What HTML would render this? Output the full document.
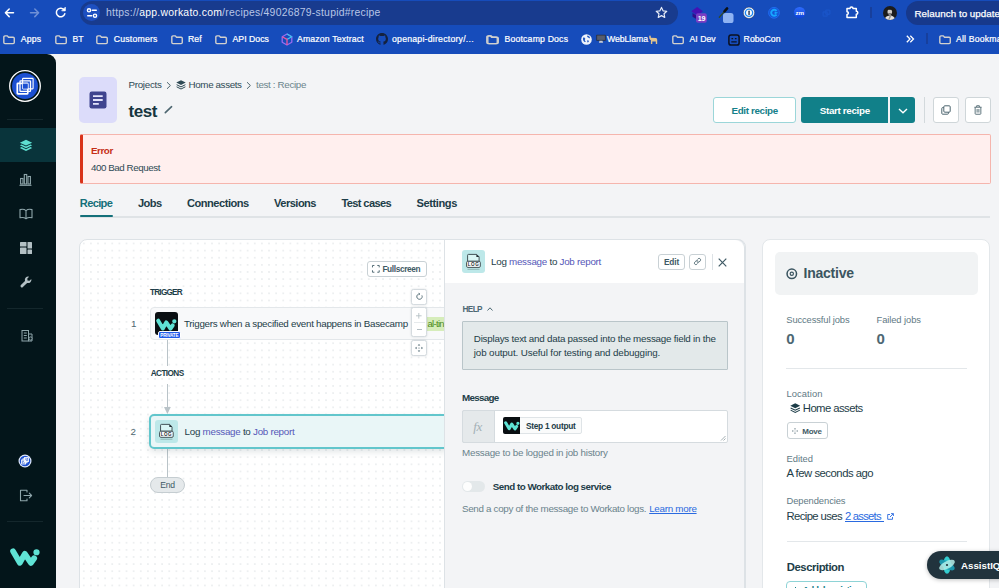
<!DOCTYPE html>
<html><head><meta charset="utf-8"><title>test</title>
<style>
html,body{margin:0;padding:0;}
body{width:999px;height:588px;overflow:hidden;position:relative;background:#f3f4f6;font-family:"Liberation Sans",sans-serif;}
.t{position:absolute;white-space:nowrap;}
.r{position:absolute;box-sizing:border-box;}
svg{position:absolute;overflow:visible;}
a{color:inherit}
</style></head><body>
<div class="r" style="left:0px;top:0px;width:999px;height:54px;background:#164cbb;"></div>
<div class="r" style="left:80px;top:1px;width:598px;height:24px;background:#183b8e;border-radius:12px;"></div>
<svg style="left:0;top:0" width="80" height="26" viewBox="0 0 80 26" fill="none" stroke-linecap="round" stroke-linejoin="round">
<path d="M13.5 12.8H5.6M9.2 9l-3.8 3.8 3.8 3.8" stroke="#fff" stroke-width="1.5"/>
<path d="M30.5 12.8h7.9M34.8 9l3.8 3.8-3.8 3.8" stroke="#6f90d6" stroke-width="1.5"/>
<path d="M64.3 10.2a4.3 4.3 0 1 0 .5 3.6" stroke="#fff" stroke-width="1.5"/>
<path d="M65.3 7.6v3.2h-3.2z" fill="#fff" stroke="#fff" stroke-width="0.8"/>
</svg>
<div class="r" style="left:82.7px;top:3.8px;width:17.4px;height:17.4px;background:#1d4fc0;border-radius:9px;"></div>
<svg style="left:82px;top:3px" width="20" height="20" viewBox="0 0 20 20" fill="none" stroke="#fff" stroke-width="1.4" stroke-linecap="round">
<circle cx="7" cy="7.3" r="1.6"/><path d="M10.3 7.3h4"/><circle cx="13" cy="12.7" r="1.6"/><path d="M5.7 12.7h4"/></svg>
<div class="t" style="left:106.0px;top:6.80px;font-size:10.4px;line-height:12px;letter-spacing:0.25px;color:#ffffff;"><span style="color:#b9c6e6">https://</span>app.workato.com<span style="color:#b9c6e6">/recipes/49026879-stupid#recipe</span></div>
<svg style="left:655px;top:6px" width="13" height="13" viewBox="0 0 24 24" fill="none" stroke="#e6ebf7" stroke-width="2.2" stroke-linejoin="round"><path d="M12 2.6l2.9 6.3 6.8.8-5 4.7 1.3 6.8-6-3.4-6 3.4 1.3-6.800-5-4.700 6.800-.8z"/></svg>
<svg style="left:688px;top:4px" width="24" height="20" viewBox="0 0 24 20"><path d="M3.300 7.200 9.200 3l5.800 4.200-5.800 4.200z" fill="#4511b4"/><path d="M4.500 9v3.800l4.500 2.700V12z" fill="#2f0d8a"/><rect x="8" y="9.200" width="10.800" height="9.600" rx="2" fill="#7b3ec4"/><text x="13.400" y="16.700" font-family="Liberation Sans" font-weight="700" font-size="7.200" fill="#fff" text-anchor="middle" letter-spacing="-.3">19</text></svg>
<svg style="left:716px;top:4px" width="22" height="22" viewBox="0 0 22 22"><rect x="7" y="9" width="10.500" height="10" rx="2.600" fill="#8fb3f3"/><path d="M3.300 13.300L8.300 7.600" stroke="#2f4a2c" stroke-width="1.300" stroke-linecap="round"/><path d="M8.500 7.300l2.600-2.900" stroke="#0c1116" stroke-width="2.600" stroke-linecap="round"/></svg>
<svg style="left:742px;top:6px" width="14" height="14" viewBox="0 0 14 14"><circle cx="7" cy="6.800" r="5.700" fill="#f4f6fb" stroke="#1a2a55" stroke-width=".5"/><circle cx="7" cy="6.800" r="4.300" fill="#1a86f2"/><circle cx="7" cy="6.800" r="3" fill="#f8fafd"/><rect x="6.400" y="4.600" width="1.300" height="4.400" rx=".6" fill="#14233f"/></svg>
<svg style="left:767.200px;top:6px" width="14" height="14" viewBox="0 0 14 14"><circle cx="7" cy="6.800" r="5.400" fill="#1556d6" stroke="#1e6cf0" stroke-width="1"/><path d="M9.600 5a3 3 0 1 0 0 3.600" fill="none" stroke="#16a6ff" stroke-width="1.900"/><path d="M7.600 5.400l3.600 1.400-3.600 1.400z" fill="#16a6ff"/></svg>
<svg style="left:793.400px;top:6px" width="14" height="14" viewBox="0 0 14 14"><defs><linearGradient id="zg" x1="0" y1="0" x2="0" y2="1"><stop offset="0" stop-color="#2f6dff"/><stop offset="1" stop-color="#0c41d8"/></linearGradient></defs><circle cx="6.600" cy="6.700" r="5.800" fill="url(#zg)"/><text x="6.600" y="8.700" font-family="Liberation Sans" font-weight="700" font-size="6.200" fill="#fff" text-anchor="middle" letter-spacing="-.3">zm</text></svg>
<svg style="left:821.500px;top:8.500px" width="9" height="9" viewBox="0 0 12 12" fill="none" stroke="#1a54c8" stroke-width="1.800"><rect x="1.500" y="4" width="5.500" height="5.500" rx="1"/><rect x="5" y="1.500" width="5.500" height="5.500" rx="1"/></svg>
<svg style="left:845px;top:5px" width="16" height="15" viewBox="0 0 16 15" fill="none" stroke="#fff" stroke-width="1.500" stroke-linejoin="round"><path d="M2 3.600h3a1.500 1.500 0 0 1 3 0h3.300v2.700a1.500 1.500 0 0 1 0 3v3.200H2v-3a1.400 1.400 0 0 0 0-2.800z"/></svg>
<div class="r" style="left:870px;top:7px;width:1.8px;height:11px;background:#173f9c;"></div>
<svg style="left:883px;top:6px" width="14" height="14" viewBox="0 0 14 14"><defs><clipPath id="av"><circle cx="7" cy="7" r="7"/></clipPath></defs><g clip-path="url(#av)"><rect width="14" height="14" fill="#1c1c1c"/><ellipse cx="6.800" cy="5.800" rx="2.300" ry="2.900" fill="#cfcac6"/><path d="M4.300 4.300c.6-2.200 4.600-2.200 5.200.2-1-.8-4-.9-5.200-.2z" fill="#151515"/><path d="M5.300 6.900c.9.500 2.100.5 3 0v.8h-3z" fill="#333"/><path d="M1.500 14c.3-3 2.300-4.300 5.300-4.600 3 .1 5 1.400 5.600 4.600z" fill="#e4e1de"/><path d="M6.800 8.800l-1.600 5.200h1l2.400-4.200z" fill="#9a9794"/></g></svg>
<div class="r" style="left:906px;top:1px;width:110px;height:24px;background:#17398c;border-radius:12px;"></div>
<div class="t" style="left:914.5px;top:7.80px;font-size:9.8px;line-height:12px;letter-spacing:0.03px;color:#ffffff;-webkit-text-stroke:0.25px #fff;">Relaunch to update</div>
<svg style="left:3px;top:34.7px" width="12" height="9.5" viewBox="0 0 13 11" preserveAspectRatio="none" fill="none" stroke="#d3d1ce" stroke-width="1.500" stroke-linejoin="round"><path d="M.9 2.300a1.200 1.200 0 0 1 1.200-1.200h2.600l1.300 1.500h5a1.200 1.200 0 0 1 1.200 1.200v5a1.200 1.200 0 0 1-1.200 1.200H2.100a1.200 1.200 0 0 1-1.200-1.200z"/></svg>
<div class="t" style="left:20.7px;top:34.30px;font-size:8.7px;line-height:10px;letter-spacing:0.17px;color:#ffffff;-webkit-text-stroke:0.22px #fff;">Apps</div>
<svg style="left:54.5px;top:34.7px" width="12" height="9.5" viewBox="0 0 13 11" preserveAspectRatio="none" fill="none" stroke="#d3d1ce" stroke-width="1.500" stroke-linejoin="round"><path d="M.9 2.300a1.200 1.200 0 0 1 1.200-1.200h2.600l1.300 1.500h5a1.200 1.200 0 0 1 1.200 1.200v5a1.200 1.200 0 0 1-1.200 1.200H2.100a1.200 1.200 0 0 1-1.200-1.200z"/></svg>
<div class="t" style="left:72.5px;top:34.30px;font-size:8.7px;line-height:10px;letter-spacing:-0.16px;color:#ffffff;-webkit-text-stroke:0.22px #fff;">BT</div>
<svg style="left:96px;top:34.7px" width="12" height="9.5" viewBox="0 0 13 11" preserveAspectRatio="none" fill="none" stroke="#d3d1ce" stroke-width="1.500" stroke-linejoin="round"><path d="M.9 2.300a1.200 1.200 0 0 1 1.200-1.200h2.600l1.300 1.500h5a1.200 1.200 0 0 1 1.200 1.200v5a1.200 1.200 0 0 1-1.200 1.200H2.100a1.200 1.200 0 0 1-1.200-1.200z"/></svg>
<div class="t" style="left:113.7px;top:34.30px;font-size:8.7px;line-height:10px;letter-spacing:0.22px;color:#ffffff;-webkit-text-stroke:0.22px #fff;">Customers</div>
<svg style="left:170.7px;top:34.7px" width="12" height="9.5" viewBox="0 0 13 11" preserveAspectRatio="none" fill="none" stroke="#d3d1ce" stroke-width="1.500" stroke-linejoin="round"><path d="M.9 2.300a1.200 1.200 0 0 1 1.200-1.200h2.600l1.300 1.500h5a1.200 1.200 0 0 1 1.200 1.200v5a1.200 1.200 0 0 1-1.200 1.200H2.100a1.200 1.200 0 0 1-1.200-1.200z"/></svg>
<div class="t" style="left:188.0px;top:34.30px;font-size:8.7px;line-height:10px;letter-spacing:0.05px;color:#ffffff;-webkit-text-stroke:0.22px #fff;">Ref</div>
<svg style="left:215px;top:34.7px" width="12" height="9.5" viewBox="0 0 13 11" preserveAspectRatio="none" fill="none" stroke="#d3d1ce" stroke-width="1.500" stroke-linejoin="round"><path d="M.9 2.300a1.200 1.200 0 0 1 1.200-1.200h2.600l1.300 1.500h5a1.200 1.200 0 0 1 1.200 1.200v5a1.200 1.200 0 0 1-1.200 1.200H2.100a1.200 1.200 0 0 1-1.200-1.200z"/></svg>
<div class="t" style="left:232.5px;top:34.30px;font-size:8.7px;line-height:10px;letter-spacing:0.02px;color:#ffffff;-webkit-text-stroke:0.22px #fff;">API Docs</div>
<svg style="left:487px;top:34.7px" width="12" height="9.5" viewBox="0 0 13 11" preserveAspectRatio="none" fill="none" stroke="#d3d1ce" stroke-width="1.500" stroke-linejoin="round"><path d="M.9 2.300a1.200 1.200 0 0 1 1.200-1.200h2.600l1.300 1.500h5a1.200 1.200 0 0 1 1.200 1.200v5a1.200 1.200 0 0 1-1.200 1.200H2.100a1.200 1.200 0 0 1-1.200-1.200z"/></svg>
<div class="t" style="left:504.5px;top:34.30px;font-size:8.7px;line-height:10px;letter-spacing:0.18px;color:#ffffff;-webkit-text-stroke:0.22px #fff;">Bootcamp Docs</div>
<svg style="left:672px;top:34.7px" width="12" height="9.5" viewBox="0 0 13 11" preserveAspectRatio="none" fill="none" stroke="#d3d1ce" stroke-width="1.500" stroke-linejoin="round"><path d="M.9 2.300a1.200 1.200 0 0 1 1.200-1.200h2.600l1.300 1.500h5a1.200 1.200 0 0 1 1.200 1.200v5a1.200 1.200 0 0 1-1.200 1.200H2.100a1.200 1.200 0 0 1-1.200-1.200z"/></svg>
<div class="t" style="left:689.5px;top:34.30px;font-size:8.7px;line-height:10px;letter-spacing:0.02px;color:#ffffff;-webkit-text-stroke:0.22px #fff;">AI Dev</div>
<svg style="left:281px;top:33px" width="12" height="13" viewBox="0 0 12 13" fill="none" stroke-width="1.300" stroke-linejoin="round"><path d="M6 1l4.800 2.700v5.600L6 12 1.200 9.300V3.700z" stroke="#9b6cf0"/><path d="M6 1l4.800 2.700L6 6.400" stroke="#3fc1f0"/><path d="M1.200 3.700L6 6.400V12" stroke="#f0569a"/></svg>
<div class="t" style="left:297.0px;top:34.30px;font-size:8.7px;line-height:10px;letter-spacing:0.16px;color:#ffffff;-webkit-text-stroke:0.22px #fff;">Amazon Textract</div>
<svg style="left:376px;top:33px" width="12" height="12" viewBox="0 0 16 16"><path fill="#14213f" d="M8 0C3.580 0 0 3.580 0 8c0 3.540 2.290 6.530 5.470 7.590.4.070.55-.17.55-.38 0-.19-.01-.82-.01-1.490-2.010.37-2.530-.49-2.690-.94-.09-.23-.48-.94-.82-1.130-.28-.15-.68-.52-.01-.53.630-.01 1.080.58 1.230.82.720 1.210 1.870.87 2.330.66.070-.52.280-.87.510-1.070-1.780-.2-3.640-.89-3.640-3.950 0-.87.310-1.590.82-2.150-.08-.2-.36-1.020.08-2.120 0 0 .67-.21 2.200.82.640-.18 1.320-.27 2-.27s1.360.09 2 .27c1.530-1.040 2.200-.82 2.200-.82.440 1.100.16 1.920.08 2.120.51.560.82 1.270.82 2.150 0 3.070-1.870 3.750-3.650 3.950.29.250.54.730.54 1.480 0 1.070-.01 1.930-.01 2.200 0 .21.150.46.550.38A8.013 8.013 0 0 0 16 8c0-4.420-3.580-8-8-8z"/></svg>
<div class="t" style="left:392.0px;top:34.30px;font-size:8.7px;line-height:10px;letter-spacing:0.24px;color:#ffffff;-webkit-text-stroke:0.22px #fff;">openapi-directory/...</div>
<svg style="left:486px;top:34.7px" width="12" height="9.5" viewBox="0 0 13 11" preserveAspectRatio="none" fill="none" stroke="#d3d1ce" stroke-width="1.500" stroke-linejoin="round"><path d="M.9 2.300a1.200 1.200 0 0 1 1.200-1.200h2.600l1.300 1.500h5a1.200 1.200 0 0 1 1.200 1.200v5a1.200 1.200 0 0 1-1.200 1.200H2.100a1.200 1.200 0 0 1-1.200-1.200z"/></svg>
<svg style="left:581px;top:33.500px" width="11" height="11" viewBox="0 0 11 11"><circle cx="5.500" cy="5.500" r="5.300" fill="#eef2fb"/><path d="M2.200 3.600c.9-.3 1.800.2 2 1 .2.700-.5 1.100-.3 1.800.2.600.9.600.8 1.500-.7.200-1.800-.3-2.300-1.200-.5-.9-.6-2.200-.2-3.100zM6.400 1.600c1.300.2 2.300 1.200 2.700 2.400-.6.400-1.200.3-1.600-.2-.4-.5-1.300-.4-1.400-1.200 0-.4.300-.700.300-1zM6.300 6.400c.6-.2 1.400.1 1.600.7.100.6-.5 1.200-1.100 1.500-.4-.5-.8-1.500-.5-2.200z" fill="#2257c0"/></svg>
<svg style="left:596px;top:34px" width="10" height="10" viewBox="0 0 10 10"><rect x=".3" y=".8" width="9.400" height="6" rx=".6" fill="#2b2f3a"/><rect x="1.100" y="1.500" width="7.800" height="4.400" fill="#565d6e"/><path d="M3.500 6.800h3l.6 2H2.900z" fill="#c9ccd4"/></svg>
<div class="t" style="left:607.0px;top:34.30px;font-size:8.7px;line-height:10px;letter-spacing:-0.05px;color:#ffffff;-webkit-text-stroke:0.22px #fff;">WebLlama</div>
<svg style="left:648px;top:34px" width="10" height="11" viewBox="0 0 10 11"><path d="M1.200 1l.7 1.200.7-.9.300 2.400 4.800.4c1 .1 1.500.9 1.500 1.900v4H7.800V7.600H4.300V10H2.900V6.200C1.800 5.600 1.200 4.600 1.200 3.300z" fill="#e2c48c"/></svg>
<svg style="left:727.500px;top:33.500px" width="12" height="12" viewBox="0 0 12 12" fill="none" stroke="#0b1020" stroke-width="1.500"><rect x=".9" y=".9" width="10.200" height="10.200" rx="2.200"/><path d="M3.500 4.700h1.600M6.900 4.700h1.600M3.300 7.800h5.400" stroke-width="1.300"/></svg>
<div class="t" style="left:743.6px;top:34.30px;font-size:8.7px;line-height:10px;letter-spacing:0.03px;color:#ffffff;-webkit-text-stroke:0.22px #fff;">RoboCon</div>
<svg style="left:906px;top:35px" width="8" height="8" viewBox="0 0 8 8" fill="none" stroke="#fff" stroke-width="1.300"><path d="M.8.800L4 4 .8 7.200M4.300.800L7.500 4 4.300 7.200"/></svg>
<div class="r" style="left:926px;top:33px;width:1.5px;height:11px;background:#173f9c;"></div>
<svg style="left:938.5px;top:34.7px" width="12" height="9.5" viewBox="0 0 13 11" preserveAspectRatio="none" fill="none" stroke="#d3d1ce" stroke-width="1.500" stroke-linejoin="round"><path d="M.9 2.300a1.200 1.200 0 0 1 1.200-1.200h2.600l1.300 1.500h5a1.200 1.200 0 0 1 1.200 1.200v5a1.200 1.200 0 0 1-1.200 1.200H2.100a1.200 1.200 0 0 1-1.200-1.200z"/></svg>
<div class="t" style="left:956.0px;top:34.30px;font-size:8.7px;line-height:10px;letter-spacing:0.18px;color:#ffffff;-webkit-text-stroke:0.22px #fff;">All Bookmarks</div>
<div class="r" style="left:0px;top:54px;width:56.4px;height:534px;background:#03151a;border-top-right-radius:9px;"></div>
<svg style="left:9px;top:69.500px" width="32" height="32" viewBox="0 0 32 32"><circle cx="16" cy="16" r="15.300" fill="#04161b" stroke="#fff" stroke-width="1.300"/><circle cx="16" cy="16" r="13" fill="#1b4fd1"/><g fill="none" stroke="#fff" stroke-width="1.700"><rect x="8.300" y="13.300" width="10.500" height="10.500" rx=".6"/><rect x="11" y="10.800" width="10.500" height="10.500" rx=".6" stroke-width="1.300"/><rect x="13.600" y="8.400" width="10.500" height="10.500" rx=".6" stroke-width="1.100"/></g><rect x="13.800" y="13.600" width="5" height="5" fill="#1b4fd1"/></svg>
<div class="r" style="left:7px;top:119px;width:36px;height:1px;background:#14272c;"></div>
<div class="r" style="left:0px;top:128px;width:56.4px;height:34.3px;background:#09343b;"></div>
<svg style="left:19px;top:139px" width="14" height="14" viewBox="0 0 14 14" fill="#5ee0d2"><path d="M7 .8l6.200 2.900L7 6.600.8 3.700z"/><path d="M.8 6.200l1.800-.8L7 7.500l4.400-2.100 1.800.8L7 9.200z"/><path d="M.8 8.900l1.800-.8L7 10.200l4.400-2.100 1.800.8L7 11.900z"/></svg>
<svg style="left:19px;top:173px" width="13" height="13" viewBox="0 0 13 13" fill="none" stroke="#8fa6ab" stroke-width="1.100"><rect x="1.600" y="5.500" width="2.400" height="5.500"/><rect x="5.300" y="1.500" width="2.400" height="9.500"/><rect x="9" y="3.500" width="2.400" height="7.500"/><path d="M.5 12.300h12"/></svg>
<svg style="left:19px;top:208px" width="14" height="12" viewBox="0 0 14 12" fill="none" stroke="#8fa6ab" stroke-width="1.100" stroke-linejoin="round"><path d="M7 2.600C5.500 1.300 3.200 1 1 1.600v8.200c2.200-.6 4.500-.3 6 1 1.500-1.300 3.800-1.600 6-1V1.600C10.800 1 8.500 1.300 7 2.600zM7 2.600v8.200"/></svg>
<svg style="left:19.500px;top:242px" width="12" height="12" viewBox="0 0 12 12" fill="#b3c0c4"><rect x="0" y="0" width="6.500" height="4.500" rx=".6"/><rect x="7.500" y="0" width="4.500" height="6.500" rx=".6"/><rect x="0" y="5.500" width="6.500" height="6.500" rx=".6"/><rect x="7.500" y="7.500" width="4.500" height="4.500" rx=".6"/></svg>
<svg style="left:19.500px;top:276px" width="12" height="12" viewBox="0 0 12 12" fill="#b3c0c4"><path d="M11.300 2.900L9.500 4.700 7.500 4.500 7.300 2.500 9.100.7A3.300 3.300 0 0 0 5 4.900L.9 9a1.400 1.400 0 0 0 2 2l4.200-4.100a3.300 3.300 0 0 0 4.200-4z"/></svg>
<div class="r" style="left:7px;top:308px;width:36px;height:1px;background:#14272c;"></div>
<svg style="left:20.800px;top:328.500px" width="12" height="13" viewBox="0 0 12 13" fill="none" stroke="#8fa6ab" stroke-width="1"><rect x="1" y="1.500" width="6.500" height="10.500"/><path d="M7.500 5h3.500v7H7.500M2.800 4h3M2.800 6.500h3M2.800 9h3"/><circle cx="9.500" cy="9.500" r="1.600" fill="#04161b"/></svg>
<svg style="left:18px;top:454px" width="14" height="14" viewBox="0 0 14 14"><circle cx="7" cy="7" r="6.500" fill="#dfe8fb"/><circle cx="7" cy="7" r="5.300" fill="#1b4fd1"/><g fill="none" stroke="#fff" stroke-width=".9"><rect x="3.600" y="6" width="4" height="4"/><rect x="5" y="4.800" width="4" height="4"/><rect x="6.400" y="3.600" width="4" height="4"/></g></svg>
<svg style="left:19px;top:489px" width="14" height="13" viewBox="0 0 14 13" fill="none" stroke="#8fa6ab" stroke-width="1.100" stroke-linecap="round" stroke-linejoin="round"><path d="M8 3V1.200H1.500v10.600H8V10M5 6.500h7.500M10.300 4.200l2.300 2.300-2.300 2.300"/></svg>
<div class="r" style="left:7px;top:521px;width:36px;height:1px;background:#14272c;"></div>
<svg style="left:10.200px;top:545.500px" width="31.200" height="21.200" viewBox="0 0 28 19" fill="none" stroke="#5fe3d5" stroke-width="5.200" stroke-linecap="round" stroke-linejoin="round"><path d="M2.800 4.800L8.800 15l4.500-8 5.500 8.200 2.900-4.200"/><circle cx="23.800" cy="5.600" r="1.300" fill="#5ee0d2" stroke-width="3"/></svg>
<div class="r" style="left:79px;top:77px;width:38px;height:46px;background:#dcdcfa;border-radius:5px;"></div>
<svg style="left:89px;top:91px" width="18" height="18" viewBox="0 0 18 18"><rect x=".5" y=".5" width="17" height="17" rx="2.200" fill="#3f448f"/><path d="M4 5.200h9.700M4 9h9.700M4 12.800h5.800" stroke="#e4e4fb" stroke-width="1.800"/></svg>
<div class="t" style="left:128.4px;top:78.80px;font-size:9.8px;line-height:12px;letter-spacing:-0.27px;color:#2e4a55;">Projects</div>
<svg style="left:166px;top:80.500px" width="6" height="9" viewBox="0 0 6 9" fill="none" stroke="#4d6670" stroke-width="1"><path d="M1 1.200l3.400 3.300L1 7.800"/></svg>
<svg style="left:175.900px;top:80px" width="10" height="9.500" viewBox="0 0 10 9.500" fill="#2e4a55"><path d="M.3 2.600L5 .3l4.700 2.300L5 4.900z"/><path d="M.6 4.700L5 6.900l4.400-2.200M.6 6.800L5 9l4.400-2.200" fill="none" stroke="#2e4a55" stroke-width="1"/></svg>
<div class="t" style="left:188.6px;top:78.80px;font-size:9.8px;line-height:12px;letter-spacing:-0.38px;color:#2e4a55;">Home assets</div>
<svg style="left:245.500px;top:80.500px" width="6" height="9" viewBox="0 0 6 9" fill="none" stroke="#4d6670" stroke-width="1"><path d="M1 1.200l3.400 3.300L1 7.800"/></svg>
<div class="t" style="left:256.0px;top:78.80px;font-size:9.8px;line-height:12px;letter-spacing:-0.34px;color:#6a848c;">test : Recipe</div>
<div class="t" style="left:128.4px;top:101.80px;font-size:17px;line-height:20px;letter-spacing:-0.41px;color:#173640;font-weight:700;">test</div>
<svg style="left:164px;top:105px" width="9" height="9" viewBox="0 0 9 9" fill="none" stroke="#4d6670" stroke-width="1.600" stroke-linecap="round"><path d="M1.300 7.700L7.600 1.700"/></svg>
<div class="r" style="left:713px;top:97px;width:83px;height:26px;background:#fff;border:1px solid #9bd6d9;border-radius:3px;"></div>
<div class="t" style="left:731.5px;top:104.80px;font-size:9.8px;line-height:12px;letter-spacing:-0.35px;color:#14808a;font-weight:700;">Edit recipe</div>
<div class="r" style="left:801px;top:97px;width:87px;height:26px;background:#118089;border-radius:3px 0 0 3px;"></div>
<div class="t" style="left:819.8px;top:104.80px;font-size:9.8px;line-height:12px;letter-spacing:-0.33px;color:#ffffff;font-weight:700;">Start recipe</div>
<div class="r" style="left:889.5px;top:97px;width:25.5px;height:26px;background:#118089;border-radius:0 3px 3px 0;"></div>
<svg style="left:897.500px;top:107.500px" width="10" height="6" viewBox="0 0 10 6" fill="none" stroke="#fff" stroke-width="1.400"><path d="M1 1l4 3.800L9 1"/></svg>
<div class="r" style="left:924px;top:97px;width:1px;height:26px;background:#d3d9dc;"></div>
<div class="r" style="left:933px;top:97px;width:26px;height:26px;background:#fff;border:1px solid #cfd6d9;border-radius:3px;"></div>
<svg style="left:941px;top:105px" width="10" height="10" viewBox="0 0 10 10" fill="none" stroke="#4d6670" stroke-width="1"><rect x="2.800" y=".8" width="6.400" height="6.400" rx="1"/><path d="M2.800 2.600H1.600a.8.800 0 0 0-.8.800v5a.8.800 0 0 0 .8.800h5a.8.800 0 0 0 .8-.8V7.200"/></svg>
<div class="r" style="left:964.5px;top:97px;width:26px;height:26px;background:#fff;border:1px solid #cfd6d9;border-radius:3px;"></div>
<svg style="left:973.500px;top:105.300px" width="8" height="9.800" viewBox="0 0 9 11" fill="none" stroke="#4d6670" stroke-width="1"><path d="M.5 2.500h8M3 2.300V.8h3v1.500M1.300 2.500v7.200a.7.700 0 0 0 .7.700h5a.7.700 0 0 0 .7-.7V2.500M3.500 4.500v4M5.500 4.500v4"/></svg>
<div class="r" style="left:79.5px;top:134.2px;width:911px;height:49.4px;background:#ffefee;border:1px solid #f5b5ad;border-left:3px solid #d9331a;border-radius:2px;"></div>
<div class="t" style="left:91.0px;top:144.80px;font-size:9.8px;line-height:12px;letter-spacing:-0.43px;color:#c62f17;font-weight:700;">Error</div>
<div class="t" style="left:91.0px;top:161.80px;font-size:9.8px;line-height:12px;letter-spacing:-0.45px;color:#2e4a55;">400 Bad Request</div>
<div class="t" style="left:79.8px;top:196.80px;font-size:11.1px;line-height:13px;letter-spacing:-0.67px;color:#14707a;font-weight:700;">Recipe</div>
<div class="t" style="left:138.0px;top:196.80px;font-size:11.1px;line-height:13px;letter-spacing:-0.60px;color:#1d3d48;font-weight:700;">Jobs</div>
<div class="t" style="left:187.0px;top:196.80px;font-size:11.1px;line-height:13px;letter-spacing:-0.50px;color:#1d3d48;font-weight:700;">Connections</div>
<div class="t" style="left:274.0px;top:196.80px;font-size:11.1px;line-height:13px;letter-spacing:-0.53px;color:#1d3d48;font-weight:700;">Versions</div>
<div class="t" style="left:341.5px;top:196.80px;font-size:11.1px;line-height:13px;letter-spacing:-0.64px;color:#1d3d48;font-weight:700;">Test cases</div>
<div class="t" style="left:416.5px;top:196.80px;font-size:11.1px;line-height:13px;letter-spacing:-0.41px;color:#1d3d48;font-weight:700;">Settings</div>
<div class="r" style="left:80px;top:216px;width:910px;height:1.5px;background:#dfe3e6;"></div>
<div class="r" style="left:80px;top:214.5px;width:32.5px;height:2.5px;background:#14707a;border-radius:1px;"></div>
<div class="r" style="left:78.900px;top:238.500px;width:666.700px;height:360px;border:1px solid #dde2e6;border-radius:8px;background-color:#fff;background-image:radial-gradient(circle,#e6e9eb 0.550px,transparent 0.850px);background-size:7.140px 7.140px;background-position:0.200px -0.100px;overflow:hidden;"></div>
<div class="r" style="left:366.7px;top:260.8px;width:60.1px;height:16.2px;background:#fff;border:1px solid #c9d1d5;border-radius:3px;"></div>
<svg style="left:372.200px;top:265.200px" width="7.700" height="7.700" viewBox="0 0 8 8" fill="none" stroke="#4d6670" stroke-width="1"><path d="M.5 2.500V.5h2M5.500.5h2v2M7.500 5.500v2h-2M2.500 7.500h-2v-2"/></svg>
<div class="t" style="left:382.4px;top:264.30px;font-size:8.3px;line-height:10px;letter-spacing:-0.37px;color:#3f5a65;font-weight:700;">Fullscreen</div>
<div class="t" style="left:150.0px;top:287.80px;font-size:8.2px;line-height:10px;letter-spacing:-0.77px;color:#1d3d48;font-weight:700;">TRIGGER</div>
<div class="r" style="left:149.6px;top:307px;width:300px;height:33.4px;background:#f8f9fa;border:1px solid #e3e7ea;border-radius:4px;"></div>
<div class="t" style="left:131.0px;top:317.80px;font-size:9.8px;line-height:12px;letter-spacing:-1.45px;color:#4d6670;">1</div>
<div class="r" style="left:155.2px;top:312.4px;width:22.8px;height:22.6px;background:#0a0f12;border-radius:3px;"></div>
<svg style="left:156.300px;top:316.600px" width="21.600" height="14.600" viewBox="0 0 28 19" fill="none" stroke="#5fe3d5" stroke-width="5.200" stroke-linecap="round" stroke-linejoin="round"><path d="M2.800 4.800L8.800 15l4.500-8 5.500 8.200 2.900-4.200"/><circle cx="23.800" cy="5.600" r="1.300" fill="#5ee0d2" stroke-width="3"/></svg>
<div class="r" style="left:158px;top:330.5px;width:22.5px;height:8.6px;background:#1f5be8;border:0.600px solid #fff;border-radius:2px;"></div>
<div class="t" style="left:160.3px;top:332.80px;font-size:4.6px;line-height:6px;letter-spacing:-0.18px;color:#ffffff;font-weight:700;">PRIVATE</div>
<div class="t" style="left:184.0px;top:317.80px;font-size:9.8px;line-height:12px;letter-spacing:-0.27px;color:#1d3d48;">Triggers when a specified event happens in Basecamp</div>
<div class="r" style="left:410.8px;top:316.5px;width:40px;height:14.7px;background:#d6edba;border-radius:2px;"></div>
<div class="t" style="left:427.4px;top:318.30px;font-size:9.4px;line-height:11px;letter-spacing:-0.63px;color:#4b8a1d;">al-tin</div>
<div class="r" style="left:411.2px;top:289.1px;width:16px;height:15.6px;background:#fff;border:1px solid #d5dbdf;border-radius:2.500px;box-shadow:0 0 2px rgba(40,60,70,.18);"></div>
<svg style="left:415.700px;top:293.300px" width="7" height="7" viewBox="0 0 7 7" fill="none" stroke="#4d6670" stroke-width=".9"><path d="M5.900 2.400a2.700 2.700 0 1 1-2.400-1.500"/><path d="M2.800.2l1 .8-1 .9" /></svg>
<div class="r" style="left:411.2px;top:307.3px;width:16px;height:29.9px;background:#fff;border:1px solid #d5dbdf;border-radius:2.500px;box-shadow:0 0 2px rgba(40,60,70,.18);"></div>
<div class="r" style="left:413.6px;top:322px;width:11.2px;height:1px;background:#e6eaec;"></div>
<svg style="left:416.400px;top:312.500px" width="5.600" height="5.600" viewBox="0 0 7 7" fill="none" stroke="#b3bec3" stroke-width="1.100"><path d="M3.500 0v7M0 3.500h7"/></svg>
<div class="r" style="left:416.8px;top:329.2px;width:4.8px;height:1.2px;background:#b3bec3;"></div>
<div class="r" style="left:411.2px;top:340.4px;width:16px;height:15.4px;background:#fff;border:1px solid #d5dbdf;border-radius:2.500px;box-shadow:0 0 2px rgba(40,60,70,.18);"></div>
<svg style="left:415.200px;top:344.200px" width="8" height="8" viewBox="0 0 8 8" fill="#4d6670"><path d="M4 0l1.300 1.600H2.700zM4 8L2.700 6.400h2.600zM0 4l1.600-1.300v2.600zM8 4L6.400 5.300V2.700z"/><circle cx="4" cy="4" r=".6"/></svg>
<div class="r" style="left:166.9px;top:340.4px;width:1px;height:26px;background:#b9c3c8;"></div>
<div class="t" style="left:150.8px;top:368.80px;font-size:8.2px;line-height:10px;letter-spacing:-0.59px;color:#1d3d48;font-weight:700;">ACTIONS</div>
<div class="r" style="left:166.9px;top:384px;width:1px;height:23px;background:#b9c3c8;"></div>
<svg style="left:164px;top:406.600px" width="7" height="7" viewBox="0 0 7 7"><path d="M0 0h6.800L3.400 7z" fill="#b9c3c8"/></svg>
<div class="r" style="left:166.9px;top:449px;width:1px;height:28px;background:#b9c3c8;"></div>
<div class="r" style="left:149px;top:413.7px;width:300px;height:35.5px;background:#e9f6f7;border:2px solid #62c6cc;border-radius:5px;box-shadow:0 3px 6px rgba(30,60,70,.13);"></div>
<div class="t" style="left:130.4px;top:425.80px;font-size:9.8px;line-height:12px;letter-spacing:-0.55px;color:#4d6670;">2</div>
<div class="r" style="left:155.3px;top:419.9px;width:22.9px;height:22.9px;background:#bde8e9;border-radius:3px;"></div>
<svg style="left:155.3px;top:419.9px" width="22.9" height="22.9" viewBox="0 0 23 23" fill="none" stroke="#435257" stroke-width="1"><path d="M5.600 11.300V5.200a.8.800 0 0 1 .8-.8h8.200L17.100 6.900v4.400z" fill="#d9f6f5"/><path d="M14.400 4.200v2.900h2.900z" fill="#1f2a30" stroke="none"/><rect x="4.600" y="11.300" width="13.700" height="6.100" rx="1.200" fill="#fbffff"/><path d="M5.500 19.300h12" stroke="#7fa3a4" stroke-width=".8"/><text x="11.500" y="16.200" font-family="Liberation Sans" font-weight="700" font-size="4.600" fill="#1f2a30" stroke="none" text-anchor="middle" letter-spacing=".5">LOG</text></svg>
<div class="t" style="left:184.6px;top:425.80px;font-size:9.8px;line-height:12px;letter-spacing:-0.27px;color:#1d3d48;">Log <span style="color:#5558b8">message</span> to <span style="color:#5558b8">Job report</span></div>
<div class="r" style="left:149.6px;top:477px;width:35.3px;height:16px;background:#e5e9eb;border:1px solid #c5cdd1;border-radius:8px;"></div>
<div class="t" style="left:160.2px;top:480.30px;font-size:8.6px;line-height:10px;letter-spacing:-0.27px;color:#3f5a65;">End</div>
<div class="r" style="left:443.9px;top:239px;width:301.6px;height:361px;background:#f3f4f6;border-left:1px solid #dde2e6;border-right:1px solid #dde2e6;border-top:1px solid #dde2e6;border-top-right-radius:8px;"></div>
<div class="r" style="left:444.9px;top:240px;width:299.6px;height:43px;background:#fff;border-top-right-radius:9px;"></div>
<div class="r" style="left:462.2px;top:250px;width:23px;height:23px;background:#bde8e9;border-radius:3px;"></div>
<svg style="left:462.2px;top:250px" width="23" height="23" viewBox="0 0 23 23" fill="none" stroke="#435257" stroke-width="1"><path d="M5.600 11.300V5.200a.8.800 0 0 1 .8-.8h8.200L17.100 6.900v4.400z" fill="#d9f6f5"/><path d="M14.400 4.200v2.900h2.900z" fill="#1f2a30" stroke="none"/><rect x="4.600" y="11.300" width="13.700" height="6.100" rx="1.200" fill="#fbffff"/><path d="M5.500 19.300h12" stroke="#7fa3a4" stroke-width=".8"/><text x="11.500" y="16.200" font-family="Liberation Sans" font-weight="700" font-size="4.600" fill="#1f2a30" stroke="none" text-anchor="middle" letter-spacing=".5">LOG</text></svg>
<div class="t" style="left:491.0px;top:255.80px;font-size:9.8px;line-height:12px;letter-spacing:-0.26px;color:#1d3d48;">Log <span style="color:#5558b8">message</span> to <span style="color:#5558b8">Job report</span></div>
<div class="r" style="left:657.8px;top:253.6px;width:27.6px;height:16.4px;background:#fff;border:1px solid #c9d1d5;border-radius:3px;"></div>
<div class="t" style="left:664.0px;top:257.30px;font-size:8.3px;line-height:10px;letter-spacing:-0.17px;color:#3f5a65;font-weight:700;">Edit</div>
<div class="r" style="left:688.5px;top:253.6px;width:17.5px;height:16.4px;background:#fff;border:1px solid #c9d1d5;border-radius:3px;"></div>
<svg style="left:693.700px;top:258.300px" width="7" height="7" viewBox="0 0 7 7" fill="none" stroke="#4d6670" stroke-width=".9" stroke-linecap="round"><path d="M3 4a1.500 1.500 0 0 0 2.100 0l1.200-1.200A1.500 1.500 0 0 0 4.200.7l-.6.600"/><path d="M4 3a1.500 1.500 0 0 0-2.100 0L.7 4.200a1.500 1.500 0 0 0 2.100 2.100l.6-.6"/></svg>
<div class="r" style="left:712px;top:254px;width:1px;height:16px;background:#dde2e6;"></div>
<svg style="left:718px;top:257.500px" width="9" height="9" viewBox="0 0 9 9" fill="none" stroke="#3f5a65" stroke-width="1.200"><path d="M.7.700l7.600 7.600M8.300.700L.7 8.300"/></svg>
<div class="t" style="left:462.5px;top:304.80px;font-size:8.2px;line-height:10px;letter-spacing:-0.62px;color:#4d6974;font-weight:700;">HELP</div>
<svg style="left:487px;top:307px" width="6" height="4" viewBox="0 0 6 4" fill="none" stroke="#4d6974" stroke-width="1"><path d="M.5 3.500L3 .8l2.500 2.700"/></svg>
<div class="r" style="left:462px;top:320.6px;width:265.7px;height:49.6px;background:#e3e9ea;border:1px solid #b9c5c9;border-radius:1px;"></div>
<div class="t" style="left:473.8px;top:332.80px;font-size:9.8px;line-height:12px;letter-spacing:-0.23px;color:#1d3d48;">Displays text and data passed into the message field in the</div>
<div class="t" style="left:473.8px;top:346.80px;font-size:9.8px;line-height:12px;letter-spacing:-0.13px;color:#1d3d48;">job output. Useful for testing and debugging.</div>
<div class="t" style="left:462.0px;top:391.80px;font-size:9.8px;line-height:12px;letter-spacing:-0.71px;color:#1d3d48;font-weight:700;">Message</div>
<div class="r" style="left:462px;top:410.3px;width:265.7px;height:32.8px;background:#fff;border:1px solid #d5dbdf;border-radius:2px;"></div>
<div class="r" style="left:462px;top:410.3px;width:33.2px;height:32.8px;background:#e5e9eb;border:1px solid #d5dbdf;border-radius:2px 0 0 2px;"></div>
<div class="t" style="left:473.200px;top:418.500px;font-family:'Liberation Serif',serif;font-style:italic;font-size:13px;line-height:15px;color:#a3b0b6;letter-spacing:-0.200px;">fx</div>
<div class="r" style="left:502.6px;top:417.3px;width:79.1px;height:16.8px;background:#fafbfb;border:1px solid #dfe4e7;border-radius:2px;"></div>
<div class="r" style="left:502.6px;top:417.3px;width:17.7px;height:16.8px;background:#0a0f12;border-radius:2px 0 0 2px;"></div>
<svg style="left:503.600px;top:420.100px" width="16.400" height="11.100" viewBox="0 0 28 19" fill="none" stroke="#5fe3d5" stroke-width="5.200" stroke-linecap="round" stroke-linejoin="round"><path d="M2.800 4.800L8.800 15l4.500-8 5.500 8.200 2.900-4.200"/><circle cx="23.800" cy="5.600" r="1.300" fill="#5ee0d2" stroke-width="3"/></svg>
<div class="t" style="left:525.9px;top:421.30px;font-size:8.3px;line-height:10px;letter-spacing:-0.26px;color:#1d3d48;font-weight:700;">Step 1 output</div>
<svg style="left:720px;top:435px" width="6" height="6" viewBox="0 0 6 6" stroke="#8d9aa0" stroke-width=".8"><path d="M5.500 1L1 5.500M5.500 3.500l-2 2"/></svg>
<div class="t" style="left:462.0px;top:446.80px;font-size:9.8px;line-height:12px;letter-spacing:-0.24px;color:#6a838c;">Message to be logged in job history</div>
<div class="r" style="left:462px;top:481px;width:23.3px;height:11.2px;background:#e3e8ea;border-radius:6px;"></div>
<div class="r" style="left:463px;top:482px;width:9.2px;height:9.2px;background:#fdfdfd;border-radius:5px;"></div>
<div class="t" style="left:492.8px;top:480.80px;font-size:9.8px;line-height:12px;letter-spacing:-0.50px;color:#1d3d48;font-weight:700;">Send to Workato log service</div>
<div class="t" style="left:462.0px;top:502.80px;font-size:9.8px;line-height:12px;letter-spacing:-0.31px;color:#6a838c;">Send a copy of the message to Workato logs.</div>
<div class="t" style="left:649.2px;top:502.80px;font-size:9.8px;line-height:12px;letter-spacing:-0.27px;color:#2a6ae0;"><span style="text-decoration:underline">Learn more</span></div>
<div class="r" style="left:762.2px;top:239px;width:227.8px;height:361px;background:#fff;border:1px solid #e3e7ea;border-radius:8px;"></div>
<div class="r" style="left:775px;top:252px;width:203.2px;height:42.5px;background:#f1f3f4;border-radius:5px;"></div>
<svg style="left:786.300px;top:267.700px" width="11.600" height="11.600" viewBox="0 0 12 12" fill="none" stroke="#3b5560"><circle cx="6" cy="6" r="4.900" stroke-width="1.600"/><circle cx="6" cy="6" r="1.700" stroke-width="1.200"/></svg>
<div class="t" style="left:803.5px;top:264.80px;font-size:14px;line-height:17px;letter-spacing:-0.23px;color:#3b5560;font-weight:700;">Inactive</div>
<div class="t" style="left:786.3px;top:314.30px;font-size:9.4px;line-height:11px;letter-spacing:-0.13px;color:#5f7a85;">Successful jobs</div>
<div class="t" style="left:876.5px;top:314.30px;font-size:9.4px;line-height:11px;letter-spacing:-0.09px;color:#5f7a85;">Failed jobs</div>
<div class="t" style="left:786.3px;top:329.80px;font-size:15px;line-height:18px;letter-spacing:0.56px;color:#4d6873;font-weight:700;">0</div>
<div class="t" style="left:876.5px;top:329.80px;font-size:15px;line-height:18px;letter-spacing:0.56px;color:#4d6873;font-weight:700;">0</div>
<div class="r" style="left:786.3px;top:368px;width:180.7px;height:1px;background:#e3e7ea;"></div>
<div class="t" style="left:786.5px;top:388.30px;font-size:9.4px;line-height:11px;letter-spacing:0.07px;color:#5f7a85;">Location</div>
<svg style="left:789.500px;top:403.200px" width="10.500" height="10" viewBox="0 0 10 9.500" fill="#1d3d48"><path d="M.3 2.600L5 .3l4.700 2.300L5 4.900z"/><path d="M.6 4.700L5 6.900l4.400-2.200M.6 6.800L5 9l4.400-2.200" fill="none" stroke="#1d3d48" stroke-width="1"/></svg>
<div class="t" style="left:802.8px;top:401.30px;font-size:11.3px;line-height:14px;letter-spacing:-0.56px;color:#1d3d48;">Home assets</div>
<div class="r" style="left:786.5px;top:422.4px;width:41.7px;height:17px;background:#fff;border:1px solid #c9d1d5;border-radius:3px;"></div>
<svg style="left:792.300px;top:428px" width="6" height="6" viewBox="0 0 8 8" fill="#4d6670"><path d="M4 0l1.300 1.600H2.700zM4 8L2.700 6.400h2.600zM0 4l1.600-1.300v2.600zM8 4L6.400 5.300V2.700z"/><circle cx="4" cy="4" r=".6"/></svg>
<div class="t" style="left:802.2px;top:426.80px;font-size:8px;line-height:10px;letter-spacing:-0.21px;color:#3f5a65;font-weight:700;">Move</div>
<div class="t" style="left:786.5px;top:453.30px;font-size:9.4px;line-height:11px;letter-spacing:-0.03px;color:#5f7a85;">Edited</div>
<div class="t" style="left:786.5px;top:466.30px;font-size:11.3px;line-height:14px;letter-spacing:-0.48px;color:#1d3d48;">A few seconds ago</div>
<div class="t" style="left:786.5px;top:495.30px;font-size:9.4px;line-height:11px;letter-spacing:-0.08px;color:#5f7a85;">Dependencies</div>
<div class="t" style="left:786.5px;top:509.30px;font-size:11.3px;line-height:14px;letter-spacing:-0.61px;color:#1d3d48;">Recipe uses</div>
<div class="t" style="left:844.9px;top:509.30px;font-size:11.3px;line-height:14px;letter-spacing:-0.76px;color:#2a6ae0;">2 assets</div>
<div class="r" style="left:844.9px;top:521.3px;width:39px;height:1px;background:#2a6ae0;"></div>
<svg style="left:887.300px;top:513px" width="7" height="7" viewBox="0 0 7 7" fill="none" stroke="#2a6ae0" stroke-width=".9"><path d="M5.500 4v2.300H.7V1.500H3M4 .6h2.400V3M6.300.7L3 4"/></svg>
<div class="r" style="left:786.5px;top:541px;width:180.5px;height:1px;background:#e3e7ea;"></div>
<div class="t" style="left:786.8px;top:560.30px;font-size:11.3px;line-height:14px;letter-spacing:-0.45px;color:#1d3d48;font-weight:700;">Description</div>
<div class="r" style="left:786.2px;top:581.2px;width:81.2px;height:20px;background:#fff;border:1px solid #8ed3d6;border-radius:4px;"></div>
<div class="t" style="left:802.6px;top:584.30px;font-size:9.4px;line-height:11px;letter-spacing:-0.90px;color:#14808a;font-weight:700;">Add description</div>
<div class="r" style="left:795.3px;top:587.3px;width:1.2px;height:4px;background:#14808a;"></div>
<div class="r" style="left:927px;top:550.9px;width:100px;height:28.1px;background:#21333d;border-radius:14px;box-shadow:0 1px 4px rgba(0,0,0,.25);"></div>
<svg style="left:937.700px;top:556.200px" width="18" height="18" viewBox="0 0 18 18"><ellipse cx="9" cy="9" rx="3.700" ry="8.700" fill="#35cdd0"/><ellipse cx="9" cy="9" rx="3.700" ry="8.700" fill="#1e9cb2" transform="rotate(-60 9 9)" opacity=".95"/><ellipse cx="9" cy="9" rx="3.700" ry="8.700" fill="#b5f0ea" transform="rotate(62 9 9)" opacity=".85"/><circle cx="9" cy="9" r="1.100" fill="#21333d"/></svg>
<div class="t" style="left:961.1px;top:559.80px;font-size:9.7px;line-height:12px;letter-spacing:0.00px;color:#ffffff;font-weight:700;">AssistIQ</div>
</body></html>
